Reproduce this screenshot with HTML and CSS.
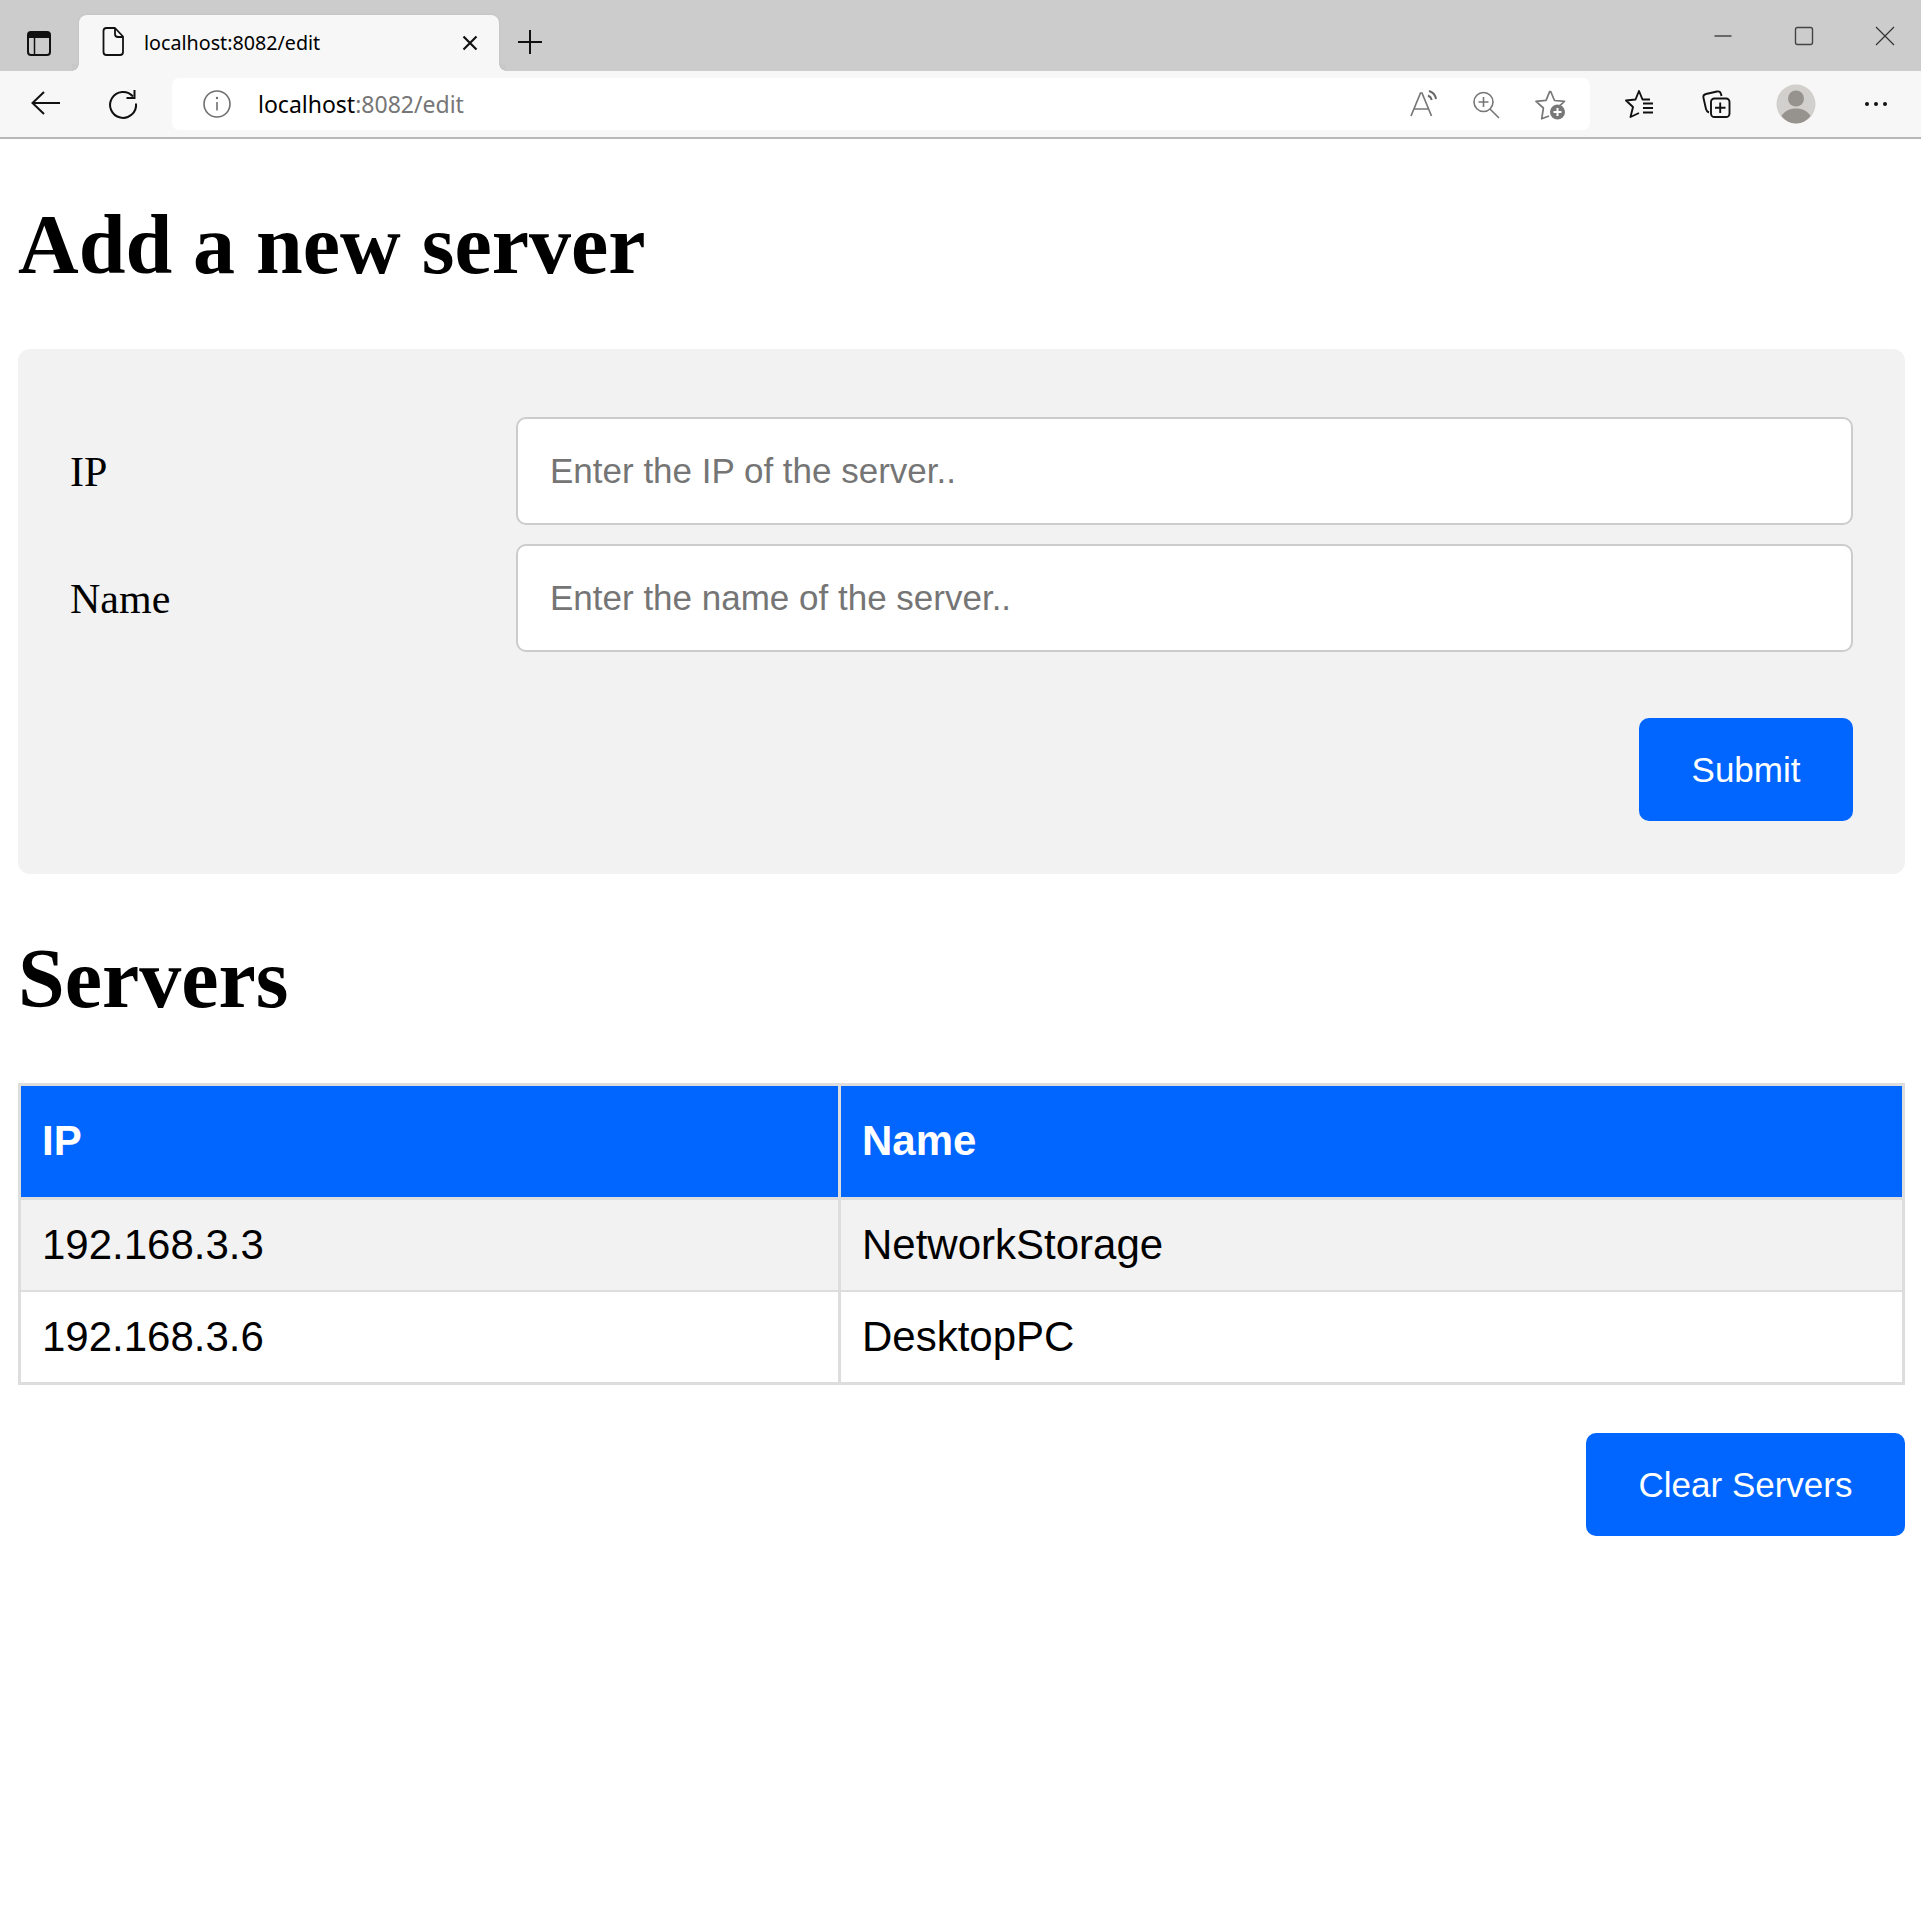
FILE: index.html
```html
<!DOCTYPE html>
<html lang="en">
<head>
<meta charset="utf-8">
<title>localhost:8082/edit</title>
<link rel="stylesheet" href="styles.css">
</head>
<body>
<header class="browser">
  <div class="tabstrip">
    <svg class="ico sidebar-ico" viewBox="0 0 40 40"><rect x="9" y="9" width="22" height="23" rx="3" fill="none" stroke="#111" stroke-width="2"/><path d="M9 12a3 3 0 0 1 3-3h16a3 3 0 0 1 3 3v3H9z" fill="#111"/><path d="M15.500 15v16" stroke="#111" stroke-width="1.500"/></svg>
    <div class="tab">
      <svg class="ico doc-ico" viewBox="0 0 40 40"><path d="M13.500 7h8.500l8 8.500v15.500a3 3 0 0 1-3 3h-13.500a3 3 0 0 1-3-3v-21a3 3 0 0 1 3-3zM22 7v6a3 3 0 0 0 3 3h5" fill="none" stroke="#111" stroke-width="1.800" stroke-linejoin="round"/></svg>
      <span class="tab-title">localhost:8082/edit</span>
      <svg class="tab-close" viewBox="0 0 24 24"><path d="M5.500 5.500l13 13M18.500 5.500l-13 13" stroke="#111" stroke-width="2.200"/></svg>
    </div>
    <svg class="ico plus-ico" viewBox="0 0 40 40"><path d="M20 8v24M8 20h24" stroke="#111" stroke-width="2"/></svg>
    <div class="win-controls">
      <svg class="ico" viewBox="0 0 40 40"><path d="M11.500 20h17" stroke="#333" stroke-width="1.300"/></svg>
      <svg class="ico" viewBox="0 0 40 40"><rect x="11.500" y="11.500" width="17" height="17" rx="2" fill="none" stroke="#444" stroke-width="1.400"/></svg>
      <svg class="ico" viewBox="0 0 40 40"><path d="M11 11l18 18M29 11l-18 18" stroke="#333" stroke-width="1.200"/></svg>
    </div>
  </div>
  <div class="toolbar">
    <svg class="ico nav-ico" viewBox="0 0 40 40"><path d="M7 20h27M18 9l-11.500 11 11.500 11" fill="none" stroke="#111" stroke-width="2"/></svg>
    <svg class="ico nav-ico reload-ico" viewBox="0 0 40 40"><path d="M30 13.500a13 13 0 1 0 3 7" fill="none" stroke="#111" stroke-width="2"/><path d="M31.500 7v8h-8" fill="none" stroke="#111" stroke-width="2"/></svg>
    <div class="address">
      <svg class="ico" viewBox="0 0 40 40"><circle cx="20" cy="20" r="13" fill="none" stroke="#6f6f6f" stroke-width="1.600"/><path d="M20 18v8.500" stroke="#6f6f6f" stroke-width="1.600"/><circle cx="20" cy="14" r="1.200" fill="#6f6f6f"/></svg>
      <span class="url"><span class="url-host">localhost</span>:8082/edit</span>
      <svg class="ico read-ico" viewBox="0 0 40 40"><path d="M7 32l9.500-23h1.500l9.500 23M10.500 25h13.500" fill="none" stroke="#777" stroke-width="1.700"/><path d="M24 11.500c2 .8 3.200 2.200 3.800 4.500M25 7c3.800 1 6.200 3.800 7 8" fill="none" stroke="#666" stroke-width="2"/></svg>
      <svg class="ico zoom-ico" viewBox="0 0 40 40"><circle cx="17.500" cy="18" r="9.500" fill="none" stroke="#777" stroke-width="1.600"/><path d="M24 25l9 9M17.500 13v10M12.500 18h10" fill="none" stroke="#777" stroke-width="1.600"/></svg>
      <svg class="ico star-ico" viewBox="0 0 40 40"><path d="M20.500 7l4 9.500 10 .8-6 5.500M19 32l-7.300 2.800 1.700-10.800-7.400-6.700 10-1 4-9.500" fill="none" stroke="#777" stroke-width="1.700" stroke-linejoin="round"/><circle cx="27.500" cy="28" r="7.500" fill="#777"/><path d="M27.500 24v8M23.500 28h8" stroke="#fff" stroke-width="2"/></svg>
    </div>
    <svg class="ico fav-ico" viewBox="0 0 40 40"><path d="M31 15.500h-7.500l-3.500-8.500-3.500 8.500-9.500 1 7 6.500-2.500 10 8.500-4" fill="none" stroke="#111" stroke-width="1.900" stroke-linejoin="round"/><path d="M24 19.500h10M24 24h10M24 28.500h10" stroke="#111" stroke-width="1.900"/></svg>
    <svg class="ico coll-ico" viewBox="0 0 40 40"><path d="M13 28.500c-1.500-.5-2.500-1.500-3-3.500l-2.500-11c-.5-2 .5-3.500 2.500-4l11-2.500c2-.4 3.500.5 4 2.500l.5 2" fill="none" stroke="#111" stroke-width="1.900"/><rect x="15" y="14.500" width="18.500" height="18.500" rx="3.500" fill="none" stroke="#111" stroke-width="1.900"/><path d="M24.200 18.500v10.500M19 23.800h10.500" stroke="#111" stroke-width="1.900"/></svg>
    <div class="avatar"><svg viewBox="0 0 40 40"><circle cx="20" cy="20" r="19.500" fill="#d2d0cc"/><circle cx="20" cy="14.500" r="8" fill="#96928d"/><path d="M5.500 32c3-5 8-7.500 14.500-7.500s11.500 2.500 14.500 7.500c-3.500 4.500-8.500 7.500-14.500 7.500s-11-3-14.500-7.500z" fill="#96928d"/></svg></div>
    <svg class="ico dots-ico" viewBox="0 0 40 40"><circle cx="11" cy="20" r="2" fill="#111"/><circle cx="20" cy="20" r="2" fill="#111"/><circle cx="29" cy="20" r="2" fill="#111"/></svg>
  </div>
</header>
<main class="page">
  <h1 class="title">Add a new server</h1>
  <form class="panel">
    <div class="fields">
      <div class="field">
        <label class="field-label" for="ip">IP</label>
        <input class="field-input" id="ip" type="text" placeholder="Enter the IP of the server..">
      </div>
      <div class="field">
        <label class="field-label" for="name">Name</label>
        <input class="field-input" id="name" type="text" placeholder="Enter the name of the server..">
      </div>
    </div>
    <div class="actions panel-actions"><button class="btn" type="button">Submit</button></div>
  </form>
  <h1 class="title">Servers</h1>
  <table class="servers">
    <thead><tr><th>IP</th><th>Name</th></tr></thead>
    <tbody>
      <tr><td>192.168.3.3</td><td>NetworkStorage</td></tr>
      <tr><td>192.168.3.6</td><td>DesktopPC</td></tr>
    </tbody>
  </table>
  <div class="actions clear-actions"><button class="btn" type="button">Clear Servers</button></div>
</main>
</body>
</html>
```
FILE: styles.css
```css
* { box-sizing: border-box; }
html, body { margin: 0; padding: 0; background: #fff; color: #000; }
body { font-family: "Liberation Serif", serif; min-height: 1926px; }
.ico { width: 40px; height: 40px; flex: none; display: block; }

.browser { font-family: "Noto Sans", sans-serif; }
.tabstrip { height: 71px; background: #ccc; display: flex; align-items: flex-start; }
.sidebar-ico { margin: 23px 0 0 19px; }
.tab { position: relative; width: 420px; height: 56px; margin: 15px 0 0 20px; background: #f7f7f7; border-radius: 8px 8px 0 0; box-shadow: 0 0 3px rgba(0, 0, 0, .08); display: flex; align-items: center; }
.tab::before, .tab::after { content: ""; position: absolute; bottom: 0; width: 7px; height: 7px; }
.tab::before { left: -7px; background: radial-gradient(circle at 0 0, #c8c8c8 6.5px, #f7f7f7 7px); }
.tab::after { right: -7px; background: radial-gradient(circle at 100% 0, #c8c8c8 6.5px, #f7f7f7 7px); }
.doc-ico { margin-left: 14px; margin-top: -4px; }
.tab-title { margin-left: 11px; flex: 1; font-size: 19.7px; color: #000; margin-top: -2px; }
.tab-close { width: 24px; height: 24px; margin-right: 17px; margin-top: -1px; }
.plus-ico { margin: 22px 0 0 11px; }
.win-controls { margin-left: auto; margin-top: 16px; margin-right: 16px; display: flex; gap: 41px; }

.toolbar { position: relative; height: 68px; padding: 0 25px 8px 26px; background: #f7f7f7; border-bottom: 2px solid #b8b8b8; display: flex; align-items: center; }
.toolbar > .ico { margin-top: 8px; }
.toolbar > .nav-ico { margin-top: 6px; }
.reload-ico { margin-left: 37px; }
.address { flex: 1; height: 52px; margin: 8px 0 0 29px; padding: 0 20px 0 25px; background: #fff; border-radius: 7px; display: flex; align-items: center; }
.url { margin-left: 21px; font-size: 23px; color: #767676; }
.url-host { color: #000; }
.read-ico { margin-left: auto; }
.zoom-ico { margin-left: 22px; }
.star-ico { margin-left: 24px; }
.fav-ico { margin-left: 29px; }
.coll-ico { margin-left: 37px; }
.avatar { width: 40px; height: 40px; margin: 8px 0 0 40px; }
.avatar svg { display: block; width: 40px; height: 40px; }
.dots-ico { margin-left: 40px; }

.page { padding: 1px 16px 0 18px; }
.title { margin: 56px 0; font-size: 84px; line-height: 97px; font-weight: 700; }
.panel { height: 525px; padding: 68px 52px 53px; background: #f2f2f2; border-radius: 12px; }
.fields { display: flex; flex-direction: column; gap: 19px; }
.field { display: grid; grid-template-columns: 446px 1fr; align-items: center; }
.field-label { padding-top: 2px; font-size: 42px; line-height: 48px; }
.field-input { width: 100%; height: 108px; padding: 0 32px; border: 2px solid #ccc; border-radius: 10px; background: #fff; font: 35px "Liberation Sans", sans-serif; color: #000; outline: none; }
.field-input::placeholder { color: #757575; opacity: 1; }
.actions { display: flex; justify-content: flex-end; }
.panel-actions { margin-top: 66px; }
.clear-actions { margin-top: 48px; }
.btn { height: 103px; padding: 0 52.5px; border: 0; border-radius: 10px; background: #06f; color: #fff; font: 35px "Liberation Sans", sans-serif; }

.servers { width: 100%; border: 3px solid #ddd; border-spacing: 0; font: 42px/48px "Liberation Sans", sans-serif; table-layout: fixed; }
.servers th, .servers td { padding: 0 21px; text-align: left; }
.servers th { height: 114px; padding-bottom: 2px; background: #06f; color: #fff; font-weight: 700; border-bottom: 3px solid #ddd; }
.servers td { height: 92px; border-bottom: 2px solid #ddd; }
.servers tbody tr:nth-child(odd) td { background: #f2f2f2; }
.servers tbody tr:last-child td { height: 90px; border-bottom: 0; }
.servers th:first-child { width: 820px; border-right: 3px solid #ddd; }
.servers td:first-child { border-right: 3px solid #ddd; }
```
